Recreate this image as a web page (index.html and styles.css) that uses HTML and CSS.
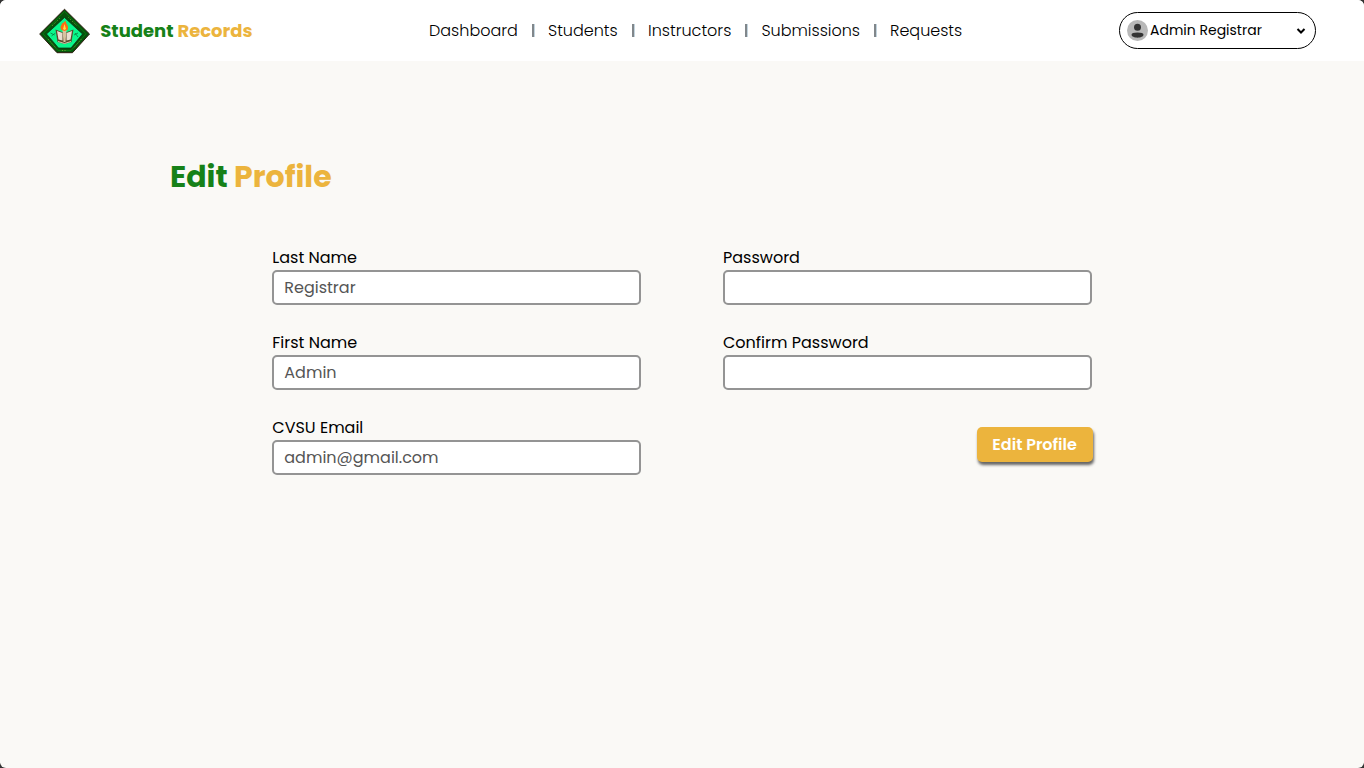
FILE: index.html
```
<!DOCTYPE html>
<html lang="en">
<head>
<meta charset="utf-8">
<title>Edit Profile</title>
<link rel="stylesheet" href="styles.css">
</head>
<body>
<div class="page">
  <header class="topbar">
    <div class="brand">
      <svg class="seal" viewBox="0 0 52 46">
        <path d="M25.500 1.200 50.500 26 33.500 44.700H18L.7 26Z" fill="#07510c" stroke="#301b10" stroke-width="1"/>
        <path d="M25.500 3.500 47 25.800 32 42.500H19L4 25.800Z" fill="none" stroke="#0a780f" stroke-width="1"/>
        <path d="M13 18 21.500 9.500M29.500 9.500 38 18M9 31 17 40M42.500 31 35 39.500M23 42.500h5" fill="none" stroke="#719b38" stroke-width="1" stroke-dasharray="1 1.500"/>
        <path d="M25.500 9.500 43.500 26 32 40H19.500L7.500 26Z" fill="#09f78b" stroke="#10220e" stroke-width=".7"/>
        <path d="m11.500 25 4 2m-3 1 4-3M35 27l4-2m-3 0 3 4" stroke="#087c40" stroke-width=".8"/>
        <path d="M16.500 21.500 25.500 25 34.500 21.500 32.500 34 25.500 36 18.500 34Z" fill="#594a2c"/>
        <path d="m18 23 5.500 2v7.500l-4-1zM33 23 27.500 25v7.500l4-1z" fill="#e8ded0"/>
        <path d="M23.500 22h4l-1 12h-2z" fill="#d7c29f"/>
        <path d="m19 33.500 6.500 2 6.500-2" fill="none" stroke="#efe8c9" stroke-width=".8"/>
        <path d="M22.500 22c-2.500-4 .5-4 .5-7 2 1 2-2.500 4-1.500-1 2 3.500 3.500 1.500 8.500l-3 1z" fill="#ff6a13"/>
        <path d="m24 21 1.500-5 1.500 5-1.500 1z" fill="#ffe347"/>
      </svg>
      <div class="brand-name"><span class="green">Student</span> <span class="gold">Records</span></div>
    </div>
    <nav class="nav">
      <a class="nav-dashboard">Dashboard</a><i></i>
      <a class="nav-students">Students</a><i></i>
      <a class="nav-instructors">Instructors</a><i></i>
      <a class="nav-submissions">Submissions</a><i></i>
      <a class="nav-requests">Requests</a>
    </nav>
    <div class="account">
      <svg class="avatar" viewBox="0 0 21 21"><circle cx="10.500" cy="10.500" r="10.500" fill="#b8b8b8"/><circle cx="10.500" cy="7.300" r="3.500" fill="#333"/><path d="M4.500 14.800c0-1.500 2-2.200 6-2.200s6 .7 6 2.200c0 1.700-3 2.900-6 2.900s-6-1.200-6-2.900Z" fill="#333"/></svg>
      <span class="account-name">Admin Registrar</span>
      <svg class="chevron" viewBox="0 0 10 8"><path d="m1.500 2 3.500 3.500L8.500 2" fill="none" stroke="#000" stroke-width="2"/></svg>
    </div>
  </header>
  <main class="content">
    <h1 class="title"><span class="green">Edit</span> <span class="gold">Profile</span></h1>
    <form class="form">
      <div class="column">
        <label class="field"><span>Last Name</span><div class="input">Registrar</div></label>
        <label class="field"><span>First Name</span><div class="input">Admin</div></label>
        <label class="field"><span>CVSU Email</span><div class="input">admin@gmail.com</div></label>
      </div>
      <div class="column">
        <label class="field"><span>Password</span><div class="input"></div></label>
        <label class="field"><span>Confirm Password</span><div class="input"></div></label>
        <button class="submit" type="button">Edit Profile</button>
      </div>
    </form>
  </main>
</div>
</body>
</html>
```
FILE: styles.css
```
* { box-sizing: border-box; }
body { margin: 0; background: #333; font-family: Poppins, Inter, sans-serif; font-size: 16px; color: #000; }
.page { height: 768px; background: #faf9f6; border-radius: 6px; overflow: hidden; }
.topbar { height: 61px; background: #fff; display: flex; align-items: center; padding: 0 48px 0 39px; }
.brand { display: flex; align-items: center; width: 390px; }
.seal { width: 52px; height: 46px; margin-right: 9.3px; }
.brand-name { font-size: 18px; font-weight: 700; white-space: nowrap; }
.green { color: #168118; }
.gold { color: #ecb43d; }
.nav { display: flex; align-items: center; font-weight: 300; line-height: 24px; white-space: nowrap; }
.nav i { width: 3px; height: 13px; background: #81878b; border-right: 1px solid #c3d4de; margin: 0 13px 0 14px; }
.nav-dashboard { width: 89px; }
.nav-students { width: 70px; }
.nav-instructors { width: 83.4px; }
.nav-submissions { width: 98.6px; }
.account { width: 197px; height: 37px; margin-left: auto; border: 1px solid #000; border-radius: 19px; display: flex; align-items: center; padding: 0 9px 0 7px; font-size: 14px; white-space: nowrap; }
.avatar { width: 21px; height: 21px; margin-right: 2px; }
.chevron { width: 10px; height: 8px; margin-left: auto; }
.content { padding: 96px 170px 0; }
.title { margin: 0; font-size: 30px; line-height: 40px; font-weight: 700; white-space: nowrap; }
.form { display: flex; gap: 82px; padding: 49px 0 0 102px; }
.column { width: 369px; display: flex; flex-direction: column; gap: 26px; }
.field { display: block; line-height: 24px; height: 59px; white-space: nowrap; }
.column:first-child .field > span { padding-left: .3px; }
.input { height: 35px; border: 2px solid #949494; border-radius: 5px; background: #fff; color: #555; padding: 0 10.3px; line-height: 31px; }
.submit { align-self: flex-end; width: 116px; height: 35px; margin: 11px -.6px 0 0; padding: 0; border: 0; border-radius: 5px; background: #ecb43d; color: #fff; font: inherit; font-weight: 600; box-shadow: 1px 3px 3px rgba(0, 0, 0, .6); }
```
